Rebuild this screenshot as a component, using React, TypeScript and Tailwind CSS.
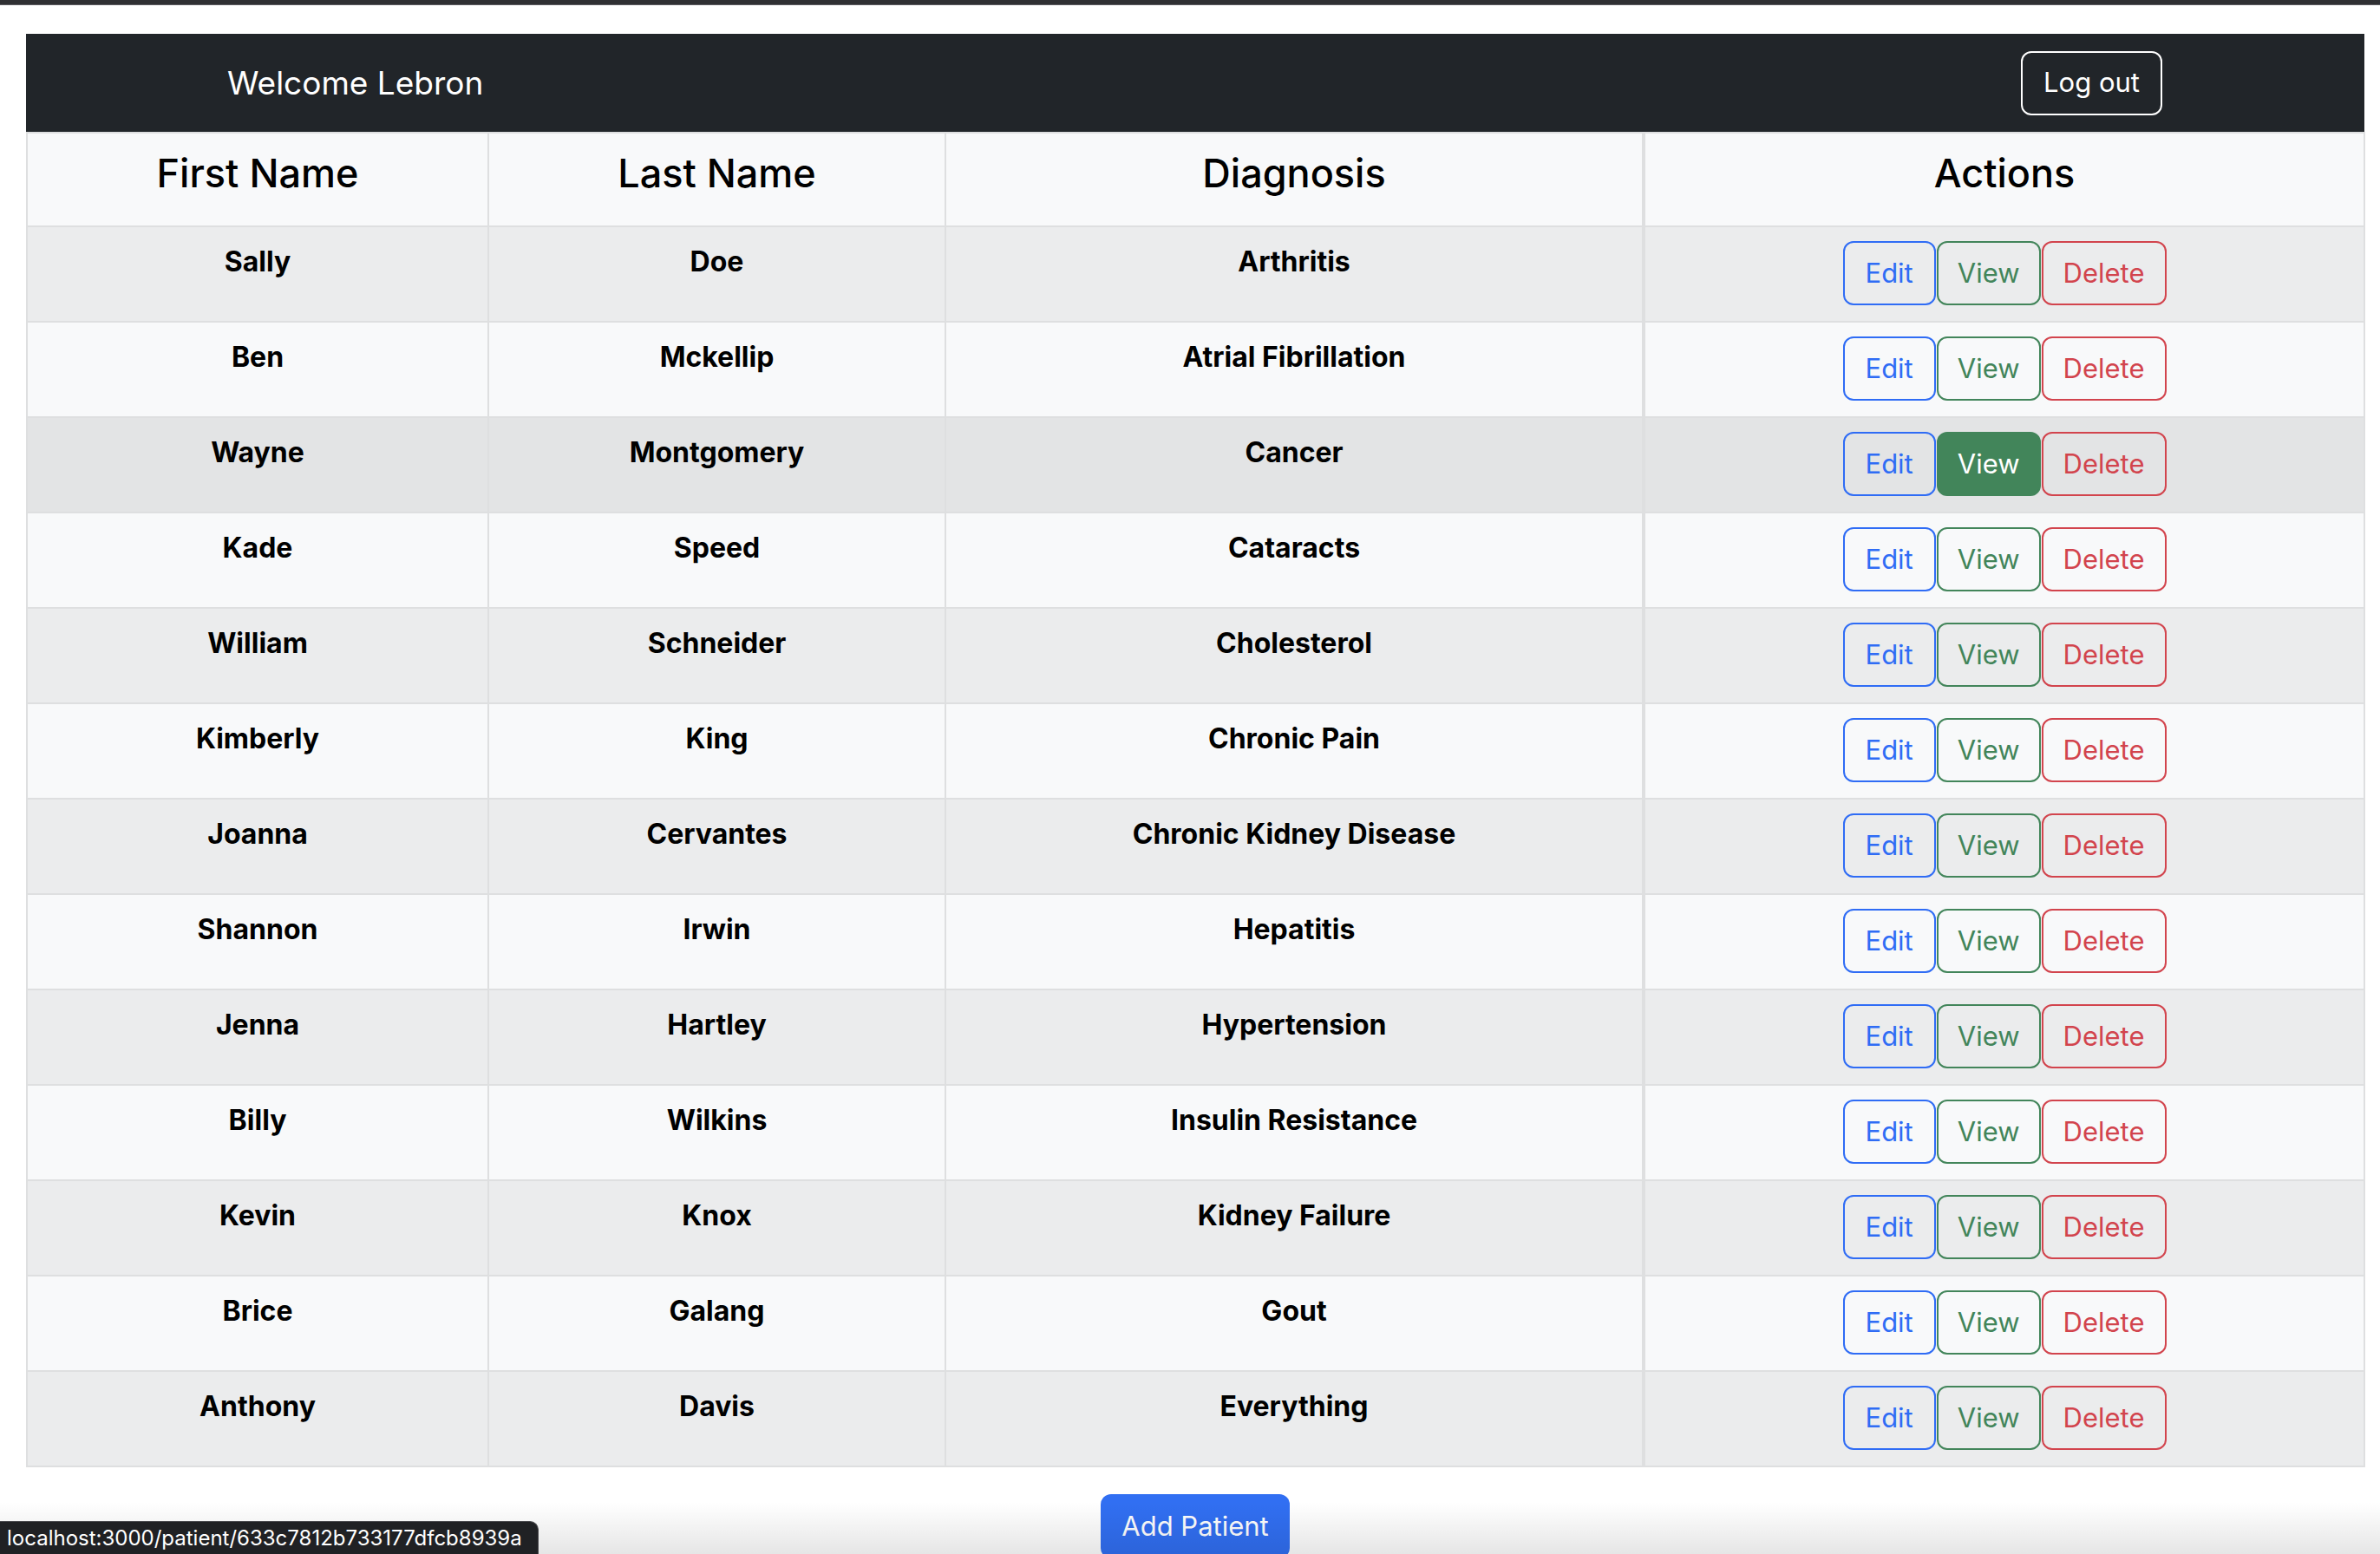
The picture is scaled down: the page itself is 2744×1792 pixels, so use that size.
import React from "react";

type Patient = { first: string; last: string; diagnosis: string };

const PATIENTS: Patient[] = [
  { first: "Sally", last: "Doe", diagnosis: "Arthritis" },
  { first: "Ben", last: "Mckellip", diagnosis: "Atrial Fibrillation" },
  { first: "Wayne", last: "Montgomery", diagnosis: "Cancer" },
  { first: "Kade", last: "Speed", diagnosis: "Cataracts" },
  { first: "William", last: "Schneider", diagnosis: "Cholesterol" },
  { first: "Kimberly", last: "King", diagnosis: "Chronic Pain" },
  { first: "Joanna", last: "Cervantes", diagnosis: "Chronic Kidney Disease" },
  { first: "Shannon", last: "Irwin", diagnosis: "Hepatitis" },
  { first: "Jenna", last: "Hartley", diagnosis: "Hypertension" },
  { first: "Billy", last: "Wilkins", diagnosis: "Insulin Resistance" },
  { first: "Kevin", last: "Knox", diagnosis: "Kidney Failure" },
  { first: "Brice", last: "Galang", diagnosis: "Gout" },
  { first: "Anthony", last: "Davis", diagnosis: "Everything" },
];

const HOVERED = 2;

export default function App() {
  return (
    <div className="relative h-[1792px] overflow-hidden bg-white font-['Inter',sans-serif] text-black">
      {/* browser strip */}
      <div className="h-[6px] border-b border-[#5a5a5e] bg-[#2f3033]" />

      <div className="ml-[30px] mr-[18px] mt-[33px]">
        {/* Navbar */}
        <nav className="flex h-[113px] items-center justify-between bg-[#212529] pl-[232px] pr-[233px]">
          <span className="text-[37px] text-white">Welcome Lebron</span>
          <button className="h-[74px] rounded-[12px] border-2 border-white px-[24px] text-[31px] text-white">
            Log out
          </button>
        </nav>

        {/* Table */}
        <table className="w-full table-fixed border-collapse">
          <colgroup>
            <col className="w-[532px]" />
            <col className="w-[527px]" />
            <col className="w-[805px]" />
            <col className="w-[831px]" />
          </colgroup>
          <thead>
            <tr className="h-[108px] bg-[#f8f9fa]">
              {["First Name", "Last Name", "Diagnosis", "Actions"].map((h, i) => (
                <th
                  key={h}
                  className={`border-2 border-[#dedfe0] px-4 pb-[32px] pt-[18px] align-top text-[45px] font-medium leading-[56px] ${
                    i === 3 ? "border-l-4" : ""
                  }`}
                >
                  {h}
                </th>
              ))}
            </tr>
          </thead>
          <tbody>
            {PATIENTS.map((p, i) => {
              const bg =
                i === HOVERED
                  ? "bg-[#e3e4e5]"
                  : i % 2 === 0
                    ? "bg-[#ebeced]"
                    : "bg-[#f8f9fa]";
              return (
                <tr key={p.first} className={`h-[110px] ${bg}`}>
                  <td className="border-2 border-[#dedfe0] px-4 pt-[16px] align-top text-center text-[32px] font-bold leading-[48px]">
                    {p.first}
                  </td>
                  <td className="border-2 border-[#dedfe0] px-4 pt-[16px] align-top text-center text-[32px] font-bold leading-[48px]">
                    {p.last}
                  </td>
                  <td className="border-2 border-[#dedfe0] px-4 pt-[16px] align-top text-center text-[32px] font-bold leading-[48px]">
                    {p.diagnosis}
                  </td>
                  <td className="border-2 border-l-4 border-[#dedfe0] px-4 py-[16px] align-top">
                    <div className="flex justify-center gap-[1px] text-[31px]">
                      <button className="h-[74px] rounded-[12px] border-2 border-[#2f6cf5] px-[24px] text-[#2f6cf5]">
                        Edit
                      </button>
                      {i === HOVERED ? (
                        <button className="h-[74px] rounded-[12px] border-2 border-[#42855a] bg-[#42855a] px-[22px] text-white">
                          View
                        </button>
                      ) : (
                        <button className="h-[74px] rounded-[12px] border-2 border-[#42855a] px-[22px] text-[#42855a]">
                          View
                        </button>
                      )}
                      <button className="h-[74px] rounded-[12px] border-2 border-[#d2444d] px-[23px] text-[#d2444d]">
                        Delete
                      </button>
                    </div>
                  </td>
                </tr>
              );
            })}
          </tbody>
        </table>

        <div className="mt-[31px] flex justify-center">
          <button className="h-[74px] rounded-[12px] bg-[#316ff2] px-[24px] text-[31px] text-white">
            Add Patient
          </button>
        </div>
      </div>

      {/* bottom fade overlay */}
      <div className="pointer-events-none absolute bottom-0 left-0 right-0 h-[60px] bg-gradient-to-b from-transparent to-black/10" />

      {/* status bubble */}
      <div className="absolute bottom-0 left-0 flex h-[38px] w-[621px] items-center rounded-tr-[10px] border-t border-r border-[#4a4a4e] bg-[#202124] pl-[8px] text-[24px] text-white">
        localhost:3000/patient/633c7812b733177dfcb8939a
      </div>
    </div>
  );
}
